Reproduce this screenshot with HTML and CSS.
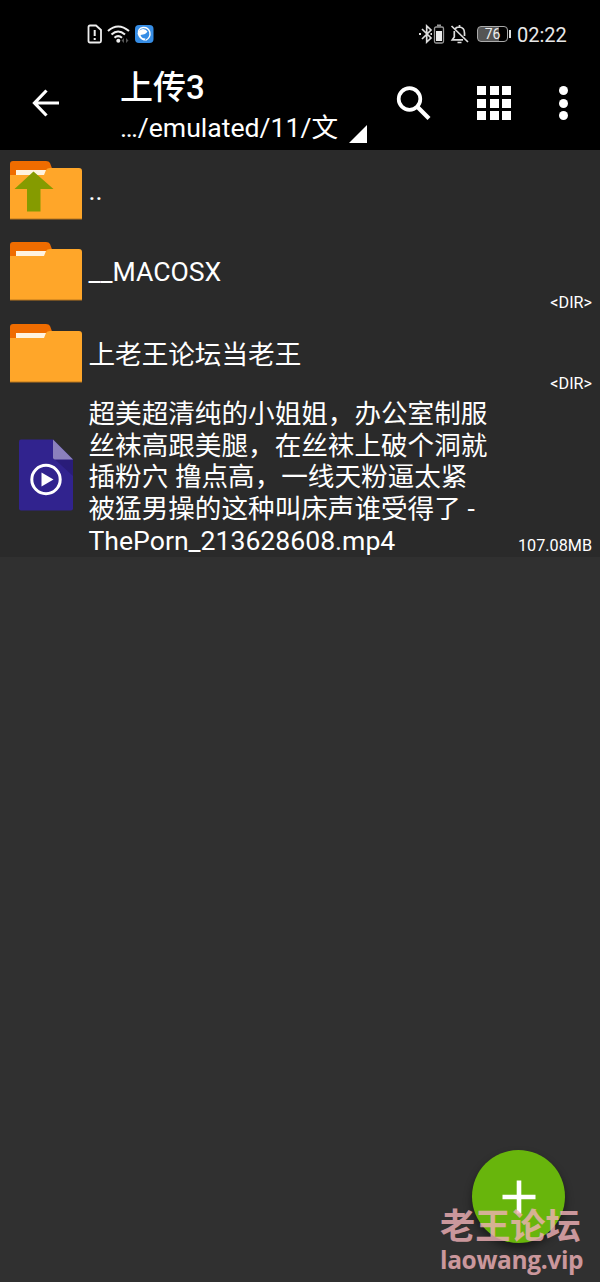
FILE: index.html
```html
<!DOCTYPE html>
<html lang="zh-CN">
<head>
<meta charset="utf-8">
<title>上传3</title>
<link rel="stylesheet" href="styles.css">
</head>
<body>
<svg class="defs" width="0" height="0">
  <symbol id="folder" viewBox="0 0 74 60">
    <path d="M1 16V4Q1 1 4 1H37Q40 1 41 3L44 11V20H1Z" fill="#ef6c00"/>
    <path d="M7 10H39V18H7Z" fill="#fff3df"/>
    <path d="M1 15H35L37 10Q38 8 41 8H70Q73 8 73 11V59H1Z" fill="#ffa629"/>
    <path d="M1 58.500H73V59.500H1Z" fill="#b9771f"/>
  </symbol>
</svg>
<div class="screen">
  <div class="status">
    <svg class="status-left" width="68" height="24" viewBox="0 0 68 24">
      <path d="M4 3.500H10L15 8V19Q15 20.500 13.500 20.500H4Q2.500 20.500 2.500 19V5Q2.500 3.500 4 3.500" fill="none" stroke="#eee" stroke-width="1.800"/>
      <path d="M8.700 8V14M8.700 16V18" stroke="#eee" stroke-width="2"/>
      <path d="M22 9Q32 0 43 9M25.500 12.500Q32 6.500 39 12.500M28.500 15.800Q32 12.500 36 15.800" fill="none" stroke="#eee" stroke-width="2.100"/>
      <circle cx="32.300" cy="18.700" r="2" fill="#eee"/>
      <path d="M38 16V21L35.500 18.500ZM40 16V21L42.500 18.500Z" fill="#555"/>
      <rect x="49" y="3" width="18.500" height="18" rx="4" fill="#368de5"/>
      <path d="M52.500 11Q52 6.500 57 5.500Q62 5 63.800 10Q65 15.500 59.500 18.500" fill="none" stroke="#fff" stroke-width="1.400"/>
      <path d="M51.500 11.500Q53 7.500 57 7Q60 7 61.500 9.500Q60 12.500 54.500 13Q55.500 16.500 59.500 16.500L58.500 18.700Q53 17.500 51.500 11.500Z" fill="#fff"/>
    </svg>
    <svg class="status-right" width="50" height="24" viewBox="0 0 50 24">
      <path d="M3 7L12 16L7.700 20V4L12 8L3 17" fill="none" stroke="#ddd" stroke-width="1.700"/>
      <path d="M0 12H2M11.500 12H13" stroke="#ddd" stroke-width="2"/>
      <rect x="15.500" y="5" width="9" height="16" rx="1.500" fill="none" stroke="#999" stroke-width="1.300"/>
      <path d="M18 3.500H22" stroke="#999" stroke-width="2"/>
      <path d="M17 9H23V19H17Z" fill="#eee"/>
      <path d="M36 7Q37 5 40.500 5Q45.500 5.500 45.500 11V14M35.300 9V15L33.300 17.800H44M38.500 20.500H42.500M40.500 3V5" fill="none" stroke="#ddd" stroke-width="1.700"/>
      <path d="M32.500 4L49 20" stroke="#ddd" stroke-width="1.700"/>
    </svg>
    <div class="battery"><span>76</span></div>
    <i class="battery-tip"></i>
    <span class="clock">02:22</span>
  </div>
  <header class="toolbar">
    <svg class="back" width="28" height="28" viewBox="0 0 28 28"><path d="M27 14H3M14.500 1.500L2.500 14L14.500 26.500" fill="none" stroke="#fff" stroke-width="3.200"/></svg>
    <div class="titles">
      <div class="title">上传3</div>
      <div class="path"><span>…/emulated/11/文</span><svg width="18" height="18" viewBox="0 0 18 18"><path d="M18 0V18H0Z" fill="#fff"/></svg></div>
    </div>
    <svg class="search" width="36" height="36" viewBox="0 0 36 36"><circle cx="13.500" cy="13" r="10.800" fill="none" stroke="#fff" stroke-width="3.700"/><path d="M21.500 21L33 32.500" stroke="#fff" stroke-width="4.300"/></svg>
    <div class="grid"><i></i><i></i><i></i><i></i><i></i><i></i><i></i><i></i><i></i></div>
    <div class="dots"><i></i><i></i><i></i></div>
  </header>
  <main class="list">
    <div class="row">
      <div class="icon"><svg width="74" height="60" viewBox="0 0 74 60"><use href="#folder"/><path d="M24.500 11.500L44.500 29H31.500V51.500H18V29H5.500Z" fill="#859b00"/></svg></div>
      <div class="name">..</div>
    </div>
    <div class="row">
      <div class="icon"><svg width="74" height="60"><use href="#folder"/></svg></div>
      <div class="name">__MACOSX</div>
      <div class="size">&lt;DIR&gt;</div>
    </div>
    <div class="row cjk">
      <div class="icon"><svg width="74" height="60"><use href="#folder"/></svg></div>
      <div class="name">上老王论坛当老王</div>
      <div class="size">&lt;DIR&gt;</div>
    </div>
    <div class="row file">
      <div class="icon"><svg width="54" height="72" viewBox="0 0 54 72">
        <path d="M2 0.500H34L54 20.500V69.500Q54 71.500 52 71.500H2Q0 71.500 0 69.500V2.500Q0 0.500 2 0.500Z" fill="#31238e"/>
        <path d="M36 20.500H54V37Z" fill="#291c79"/>
        <path d="M34 0.500L54 20.500H36Q34 20.500 34 18.500Z" fill="#8b80bd"/>
        <circle cx="27" cy="40.500" r="14.200" fill="none" stroke="#fff" stroke-width="3"/>
        <path d="M22.500 33.500V47.500L34.500 40.500Z" fill="#fff"/>
      </svg></div>
      <div class="name">超美超清纯的小姐姐，办公室制服<br>丝袜高跟美腿，在丝袜上破个洞就<br>插粉穴 撸点高，一线天粉逼太紧<br>被猛男操的这种叫床声谁受得了 -<br>ThePorn_213628608.mp4</div>
      <div class="size">107.08MB</div>
    </div>
  </main>
  <div class="fab"><svg width="34" height="34" viewBox="0 0 34 34"><path d="M17 0.500V33.500M0.500 17H33.500" stroke="#fff" stroke-width="4.600"/></svg></div>
  <div class="watermark"><div class="mark-name">老王论坛</div><div class="mark-site">laowang.vip</div></div>
</div>
</body>
</html>
```

FILE: styles.css
```css
* { box-sizing: border-box; }
body { margin: 0; background: #303030; color: #fff; font-family: Roboto, "Noto Sans CJK SC", sans-serif; }
svg { display: block; flex: none; }
.defs { position: absolute; }
.screen { position: relative; width: 600px; height: 1282px; overflow: hidden; background: #303030; }
.status { display: flex; align-items: flex-start; height: 60px; padding: 22px 33px 0 86px; background: #000; }
.status-right { margin-left: 265px; }
.battery { width: 31px; height: 16px; margin: 4px 0 0 8px; border: 1.5px solid #aaa; border-radius: 4px; background: linear-gradient(90deg, #555 0 72%, #000 72%); font-size: 14px; line-height: 14px; text-align: center; color: #eee; }
.battery-tip { width: 2px; height: 8px; margin: 8px 0 0 1px; background: #ddd; }
.clock { margin-left: 6px; font-size: 20px; line-height: 27px; color: #e8e8e8; white-space: nowrap; }
.toolbar { display: flex; height: 90px; background: #000; }
.back { margin: 29px 0 0 32px; }
.titles { width: 249px; margin-left: 60px; padding-top: 9px; }
.title { font-size: 33px; line-height: 38px; font-weight: 500; }
.path { display: flex; font-size: 26.600px; line-height: 42px; white-space: nowrap; }
.path svg { margin: 18px 0 0 11px; }
.search { margin: 26px 0 0 27px; }
.grid { display: grid; grid-template-columns: repeat(3, 9px); grid-auto-rows: 9px; gap: 3.500px; width: 34px; height: 34px; margin: 26px 0 0 45px; }
.grid i { background: #fff; }
.dots { display: flex; flex-direction: column; gap: 3.500px; margin: 26px 0 0 48px; }
.dots i { width: 9px; height: 9px; border-radius: 50%; background: #fff; }
.list { background: #2a2a2a; }
.row { display: flex; height: 81.500px; padding: 0 8px 0 9px; align-items: center; }
.row.file { height: 162.500px; }
.icon { width: 74px; display: flex; justify-content: center; padding-bottom: 2px; }
.row.file .icon { padding-bottom: 1px; }
.name { margin-left: 5.500px; font-size: 26.600px; line-height: 31.600px; white-space: nowrap; }
.row.cjk .name { padding-top: 2px; }
.row.file .name { padding-top: 3px; }
.size { margin: 0 0 0 auto; align-self: flex-end; font-size: 16.200px; line-height: 20px; }
.row.cjk .size, .row.file .size { margin-bottom: 1px; }
.fab { position: absolute; left: 472px; top: 1150px; width: 93px; height: 93px; border-radius: 50%; display: flex; align-items: center; justify-content: center; background: #68b50c; box-shadow: 0 5px 9px rgba(0,0,0,.45); }
.watermark { position: absolute; left: 440px; top: 1203px; color: #f1b1b7; opacity: .8; font-weight: 700; white-space: nowrap; }
.mark-name { font-family: "Noto Sans CJK SC", sans-serif; font-size: 35.200px; line-height: 42px; }
.mark-site { font-family: "Open Sans", sans-serif; font-size: 24.500px; line-height: 30px; letter-spacing: -.35px; }
```
